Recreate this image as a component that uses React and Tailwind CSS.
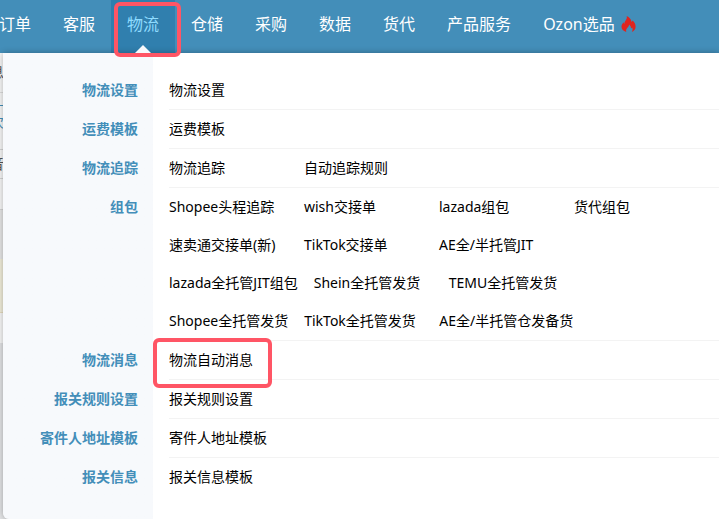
import clsx from 'clsx';

const NAV_ITEMS = ['订单', '客服', '物流', '仓储', '采购', '数据', '货代', '产品服务', 'Ozon选品'];

const MENU_GROUPS = [
  { title: '物流设置', rows: [['物流设置']] },
  { title: '运费模板', rows: [['运费模板']] },
  { title: '物流追踪', rows: [['物流追踪', '自动追踪规则']] },
  {
    title: '组包',
    rows: [
      ['Shopee头程追踪', 'wish交接单', 'lazada组包', '货代组包'],
      ['速卖通交接单(新)', 'TikTok交接单', 'AE全/半托管JIT'],
      ['lazada全托管JIT组包', 'Shein全托管发货', 'TEMU全托管发货'],
      ['Shopee全托管发货', 'TikTok全托管发货', 'AE全/半托管仓发备货'],
    ],
  },
  { title: '物流消息', rows: [['物流自动消息']] },
  { title: '报关规则设置', rows: [['报关规则设置']] },
  { title: '寄件人地址模板', rows: [['寄件人地址模板']] },
  { title: '报关信息', rows: [['报关信息模板']] },
];

const FlameIcon = () => (
  <svg width="15" height="16" viewBox="0 0 15 16" className="ml-1.5 shrink-0" aria-hidden="true">
    <path
      fill="#df241f"
      d="M5.6 0C8.4 1.3 10.2 3.2 10.6 6c.5-.3.8-.8.9-1.400C13.500 6.200 14.600 8.300 14.600 10.700c0 2.300-1.300 4.200-3.700 5.300.8-1.600.9-3 .3-4.400-.3.500-.700.800-1.200.9.100-1.600-.5-3-2-4.100.1 1.500-.6 2.300-1.600 3.300-1.200 1.200-1.600 2.500-1.100 4.300C2.200 15 .5 13.300.5 10.800c0-2 1-3.300 2.100-4.500.1.700.3 1.200.8 1.600C3.400 6.400 4 5.200 4.900 4 5.800 2.800 6.200 1.500 5.600 0z"
    />
  </svg>
);

const Highlight = ({ className }) => (
  <span
    className={clsx('absolute z-20 pointer-events-none rounded-md border-4 border-[#ff5565]', className)}
  />
);

const TopNav = () => (
  <nav className="-ml-[17px] flex h-[53px] text-base whitespace-nowrap">
    {NAV_ITEMS.map((item) => {
      const active = item === '物流';
      return (
        <a
          key={item}
          href="#"
          className={clsx(
            'relative flex shrink-0 items-center px-4 pb-1.5',
            active ? 'bg-[#307fae] text-[#8fdcff]' : 'text-white'
          )}
        >
          {item}
          {item === 'Ozon选品' && <FlameIcon />}
          {active && (
            <>
              <span className="absolute bottom-0 left-1/2 z-20 -translate-x-1/2 border-x-8 border-b-8 border-x-transparent border-b-[#f7f9fc]" />
              <Highlight className="left-[3px] -right-1.5 top-0.5 -bottom-1" />
            </>
          )}
        </a>
      );
    })}
  </nav>
);

const LogisticsMenu = () => (
  <div className="absolute top-full left-[3px] right-0 z-10 overflow-clip rounded-bl-md bg-linear-to-r from-[#f7f9fc] from-[150px] to-white to-[150px] pt-[18px] pb-[22px] text-sm shadow-[0_0_6px_rgba(0,0,0,0.3)]">
    {MENU_GROUPS.map((group, index) => (
      <section key={group.title} className="flex">
        <h3 className="w-[150px] shrink-0 pr-[15px] text-right font-bold leading-[38px] text-[#438eb9]">
          {group.title}
        </h3>
        <ul
          className={clsx(
            'ml-4 min-w-0 flex-1 border-b',
            index === MENU_GROUPS.length - 1 ? 'border-transparent' : 'border-[#f3f3f3]'
          )}
        >
          {group.rows.map((row) => (
            <li key={row[0]} className="flex h-[38px] items-center gap-4 whitespace-nowrap">
              {row.map((link) => (
                <a key={link} href="#" className="relative min-w-[119px] text-black">
                  {link}
                  {link === '物流自动消息' && <Highlight className="-left-4 right-4 -top-3 -bottom-[18px]" />}
                </a>
              ))}
            </li>
          ))}
        </ul>
      </section>
    ))}
  </div>
);

// page that lies behind the open menu
const PageBehind = () => (
  <main className="overflow-hidden bg-[#f7f7f7] text-sm leading-[38px] text-[#555]">
    <div className="h-10 border-b border-[#ddd]">
      <span className="-ml-2.5">息</span>
    </div>
    <div className="h-[13px] border-b border-[#438eb9]" />
    <div className="h-11 border-b border-[#d5d5d5] leading-[32px] text-[#438eb9]">
      <span className="-ml-2.5">次</span>
    </div>
    <div className="h-[29px] border-b border-[#d5d5d5] leading-[28px]">
      <span className="-ml-2.5">音</span>
    </div>
    <div className="h-[31px] border-b border-[#d5d5d5]" />
    <div className="h-[49px] bg-[#e6e6e6]" />
    <div className="h-[54px] border-b border-[#e6dcc0] bg-[#f1edda]" />
    <div className="h-[30px]" />
    <div className="h-44 bg-[#e2e3e5]" />
  </main>
);

export default function App() {
  return (
    <div className="overflow-hidden font-['Noto_Sans','Noto_Sans_CJK_SC',sans-serif]">
      <header className="relative bg-[#438eb9]">
        <TopNav />
        <LogisticsMenu />
      </header>
      <PageBehind />
    </div>
  );
}
